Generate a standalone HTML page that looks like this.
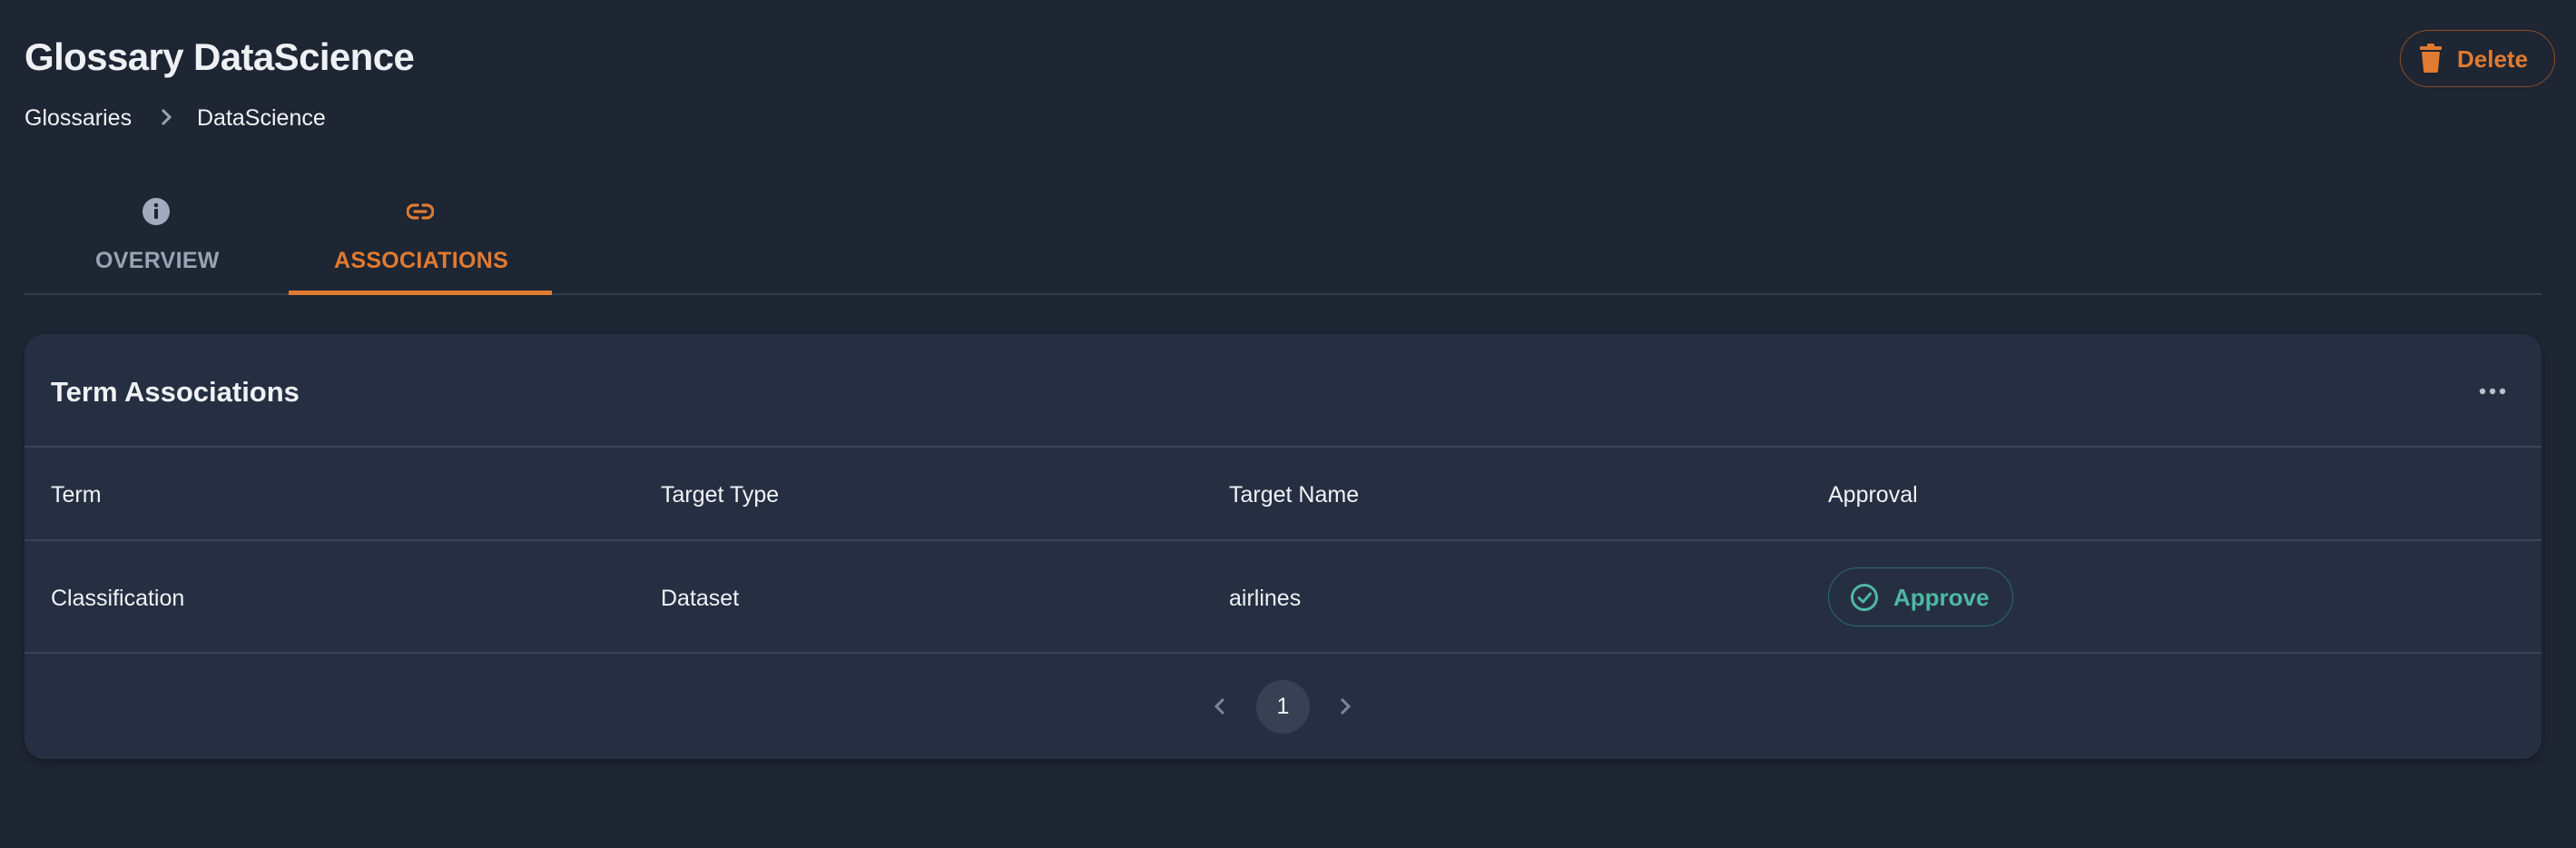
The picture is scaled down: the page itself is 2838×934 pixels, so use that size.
<!DOCTYPE html>
<html><head><meta charset="utf-8"><style>
*{margin:0;padding:0;box-sizing:border-box}
body{width:2838px;height:934px;background:#1e2533;font-family:"Liberation Sans",sans-serif;color:#eef0f4;position:relative;overflow:hidden}
.a{position:absolute;white-space:nowrap}
.title{left:27px;top:39px;font-size:42px;font-weight:bold;letter-spacing:-0.6px}
.bc{top:116px;font-size:25px;color:#f0f2f5}
.del{left:2644px;top:33px;width:171px;height:63px;border:1.5px solid #8a5024;border-radius:32px;color:#e07b30;font-size:26px;font-weight:bold}
.tab{top:273px;font-size:25px;font-weight:bold;letter-spacing:0.3px}
.card{left:27px;top:368px;width:2773px;height:468px;background:#262f42;border-radius:22px;box-shadow:0 4px 8px rgba(0,0,0,.25)}
.line{left:27px;width:2773px;height:2px;background:#3a4457}
.th{font-size:25px;color:#f0f2f5}
</style></head><body>
<div class="a title">Glossary DataScience</div>
<div class="a bc" style="left:27px">Glossaries</div>
<svg class="a" style="left:174px;top:117px" width="18" height="24" viewBox="0 0 18 24"><path d="M5 4l8 8-8 8" fill="none" stroke="#9aa3b2" stroke-width="3"/></svg>
<div class="a bc" style="left:217px">DataScience</div>
<div class="a del">
<svg class="a" style="left:20px;top:14px" width="26" height="32" viewBox="0 0 26 32"><rect x="1" y="3" width="24" height="4" rx="1" fill="#e07b30"/><rect x="9" y="0" width="8" height="4" rx="1" fill="#e07b30"/><path d="M3 9h20l-2 21a2 2 0 0 1-2 2H7a2 2 0 0 1-2-2z" fill="#e07b30"/></svg>
<span class="a" style="left:62px;top:16px">Delete</span></div>

<svg class="a" style="left:157px;top:218px" width="30" height="30" viewBox="0 0 30 30"><circle cx="15" cy="15" r="15" fill="#a1abbd"/><rect x="13" y="12" width="4" height="11" rx="1" fill="#1e2533"/><circle cx="15" cy="8" r="2.3" fill="#1e2533"/></svg>
<div class="a tab" style="left:105px;color:#9aa3b3">OVERVIEW</div>
<svg class="a" style="left:448px;top:224px" width="30" height="18" viewBox="0 0 30 18"><path d="M12 2H8a7 7 0 0 0 0 14h4M18 2h4a7 7 0 0 1 0 14h-4M9 9h12" fill="none" stroke="#e07b30" stroke-width="3.2" stroke-linecap="round"/></svg>
<div class="a tab" style="left:368px;color:#e07b30">ASSOCIATIONS</div>
<div class="a" style="left:27px;top:323px;width:2773px;height:2px;background:#343d4e"></div>
<div class="a" style="left:318px;top:320px;width:290px;height:5px;background:#e07b30"></div>

<div class="a card"></div>
<div class="a" style="left:56px;top:414px;font-size:31px;font-weight:bold;color:#f0f2f5">Term Associations</div>
<svg class="a" style="left:2731px;top:426px" width="30" height="10" viewBox="0 0 30 10"><circle cx="4" cy="5" r="3.2" fill="#b8bfcc"/><circle cx="15" cy="5" r="3.2" fill="#b8bfcc"/><circle cx="26" cy="5" r="3.2" fill="#b8bfcc"/></svg>
<div class="a line" style="top:491px"></div>
<div class="a th" style="left:56px;top:531px">Term</div>
<div class="a th" style="left:728px;top:531px">Target Type</div>
<div class="a th" style="left:1354px;top:531px">Target Name</div>
<div class="a th" style="left:2014px;top:531px">Approval</div>
<div class="a line" style="top:594px"></div>
<div class="a th" style="left:56px;top:645px">Classification</div>
<div class="a th" style="left:728px;top:645px">Dataset</div>
<div class="a th" style="left:1354px;top:645px">airlines</div>
<div class="a" style="left:2014px;top:625px;width:204px;height:65px;border:1.5px solid #2f6b68;border-radius:33px"></div>
<svg class="a" style="left:2038px;top:642px" width="32" height="32" viewBox="0 0 32 32"><circle cx="16" cy="16" r="13.5" fill="none" stroke="#4fb8a3" stroke-width="3"/><path d="M10 16.5l4.5 4.5 8-9" fill="none" stroke="#4fb8a3" stroke-width="3" stroke-linecap="round" stroke-linejoin="round"/></svg>
<div class="a" style="left:2086px;top:643px;font-size:26px;font-weight:bold;color:#4fb8a3">Approve</div>
<div class="a line" style="top:718px"></div>
<svg class="a" style="left:1336px;top:768px" width="16" height="20" viewBox="0 0 16 20"><path d="M12 2l-8 8 8 8" fill="none" stroke="#7d8596" stroke-width="3"/></svg>
<div class="a" style="left:1384px;top:749px;width:59px;height:59px;border-radius:50%;background:#374153;color:#f0f2f5;font-size:25px;text-align:center;line-height:59px">1</div>
<svg class="a" style="left:1474px;top:768px" width="16" height="20" viewBox="0 0 16 20"><path d="M4 2l8 8-8 8" fill="none" stroke="#7d8596" stroke-width="3"/></svg>
</body></html>
